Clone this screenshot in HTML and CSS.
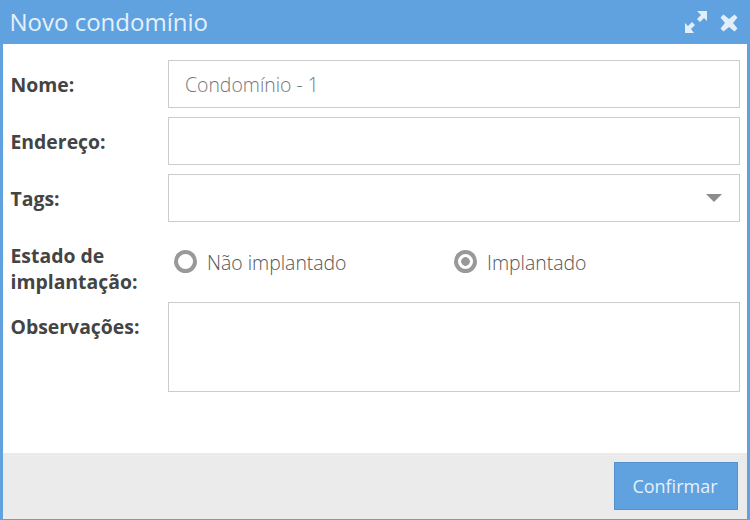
FILE: index.html
```html
<!DOCTYPE html>
<html lang="pt">
<head>
<meta charset="utf-8">
<title>Novo condomínio</title>
<link rel="stylesheet" href="styles.css">
</head>
<body>
<div class="dialog">
  <header class="titlebar">
    <h1 class="title">Novo condomínio</h1>
    <div class="actions">
      <svg class="icon" width="22" height="22" viewBox="0 0 22 22"><path d="M12 0h10v10l-3-3-4 4-3-3 4-4zM0 22V12l3 3 4-4 3 3-4 4 3 4z" fill="#e2eefa"/></svg>
      <svg class="icon close" width="18" height="18" viewBox="0 0 18 18"><path d="M3.500 .5 9 5l5.500-4.500L17.500 3.500 13 9l4.500 5.500-3 3L9 13l-5.500 4.500-3-3L5 9 .5 3.500z" fill="#e2eefa"/></svg>
    </div>
  </header>
  <form class="body">
    <div class="row">
      <label class="label">Nome:</label>
      <input class="field" type="text" placeholder="Condomínio - 1">
    </div>
    <div class="row">
      <label class="label">Endereço:</label>
      <input class="field" type="text">
    </div>
    <div class="row">
      <label class="label">Tags:</label>
      <div class="field select"><span class="caret"></span></div>
    </div>
    <div class="row state">
      <label class="label">Estado de implantação:</label>
      <div class="radios">
        <div class="radio"><span class="dot"></span><span class="radio-text">Não implantado</span></div>
        <div class="radio"><span class="dot on"></span><span class="radio-text">Implantado</span></div>
      </div>
    </div>
    <div class="row notes">
      <label class="label">Observações:</label>
      <div class="field area"></div>
    </div>
  </form>
  <footer class="footer">
    <button class="confirm" type="button">Confirmar</button>
  </footer>
</div>
</body>
</html>
```
FILE: styles.css
```css
* { box-sizing: border-box; }
html, body { margin: 0; padding: 0; }
body { width: 750px; height: 520px; overflow: hidden; font-family: "Open Sans", sans-serif; color: #444; }
.dialog { width: 750px; height: 520px; display: flex; flex-direction: column; background: #fff; border: solid #5fa2df; border-width: 0 3px 1px 3px; }
.titlebar { height: 44px; flex: none; margin: 0 -3px; padding: 0 12px 0 9.500px; background: #5fa2df; display: flex; align-items: center; justify-content: space-between; }
.title { margin: 0; font-size: 24px; font-weight: 400; color: #e6f0fa; line-height: 44px; }
.actions { display: flex; align-items: flex-start; gap: 13px; }
.icon { display: block; }
.close { margin-top: 3px; }
.body { flex: 1; display: flex; flex-direction: column; padding: 16px 7px 0 7.500px; }
.row { display: flex; align-items: center; margin-bottom: 9px; }
.label { width: 157.500px; flex: none; padding-top: 2px; font-size: 19.400px; font-weight: 700; line-height: 26px; color: #444; }
.field { flex: 1; height: 48px; border: 1px solid #ccc; background: #fff; font: 300 19.400px "Open Sans", sans-serif; padding: 0 16px; color: #555; outline: none; min-width: 0; }
.field::placeholder { color: #777; opacity: 1; }
.select { display: flex; align-items: center; justify-content: flex-end; padding-right: 17px; }
.caret { width: 0; height: 0; border: 8px solid transparent; border-top: 8px solid #8c8c8c; border-bottom: 0; }
.state { margin-bottom: 7px; margin-top: 11px; }
.state .label { padding-top: 1px; }
.radios { flex: 1; display: flex; margin-top: -14px; padding-left: 6px; }
.radio { width: 280px; display: flex; align-items: center; gap: 10px; font-size: 19.400px; font-weight: 300; line-height: 26px; color: #555; }
.radio-text { padding-top: 2px; }
.dot { width: 23px; height: 23px; border: 4px solid #999; border-radius: 50%; background: #fff; display: block; flex: none; }
.dot.on { background: radial-gradient(circle, #999 0 4px, #fff 4.600px); }
.notes { align-items: flex-start; }
.notes .label { padding-top: 12px; }
.area { height: 90px; }
.footer { flex: none; height: 66px; background: #ebebeb; display: flex; justify-content: flex-end; align-items: flex-start; padding: 9px 9px 0 0; }
.confirm { width: 124px; height: 48px; background: #5fa2df; border: 1px solid #5592cc; color: #e6f0fa; font: 400 18px "Open Sans", sans-serif; padding: 0 2px 0 0; }
```
